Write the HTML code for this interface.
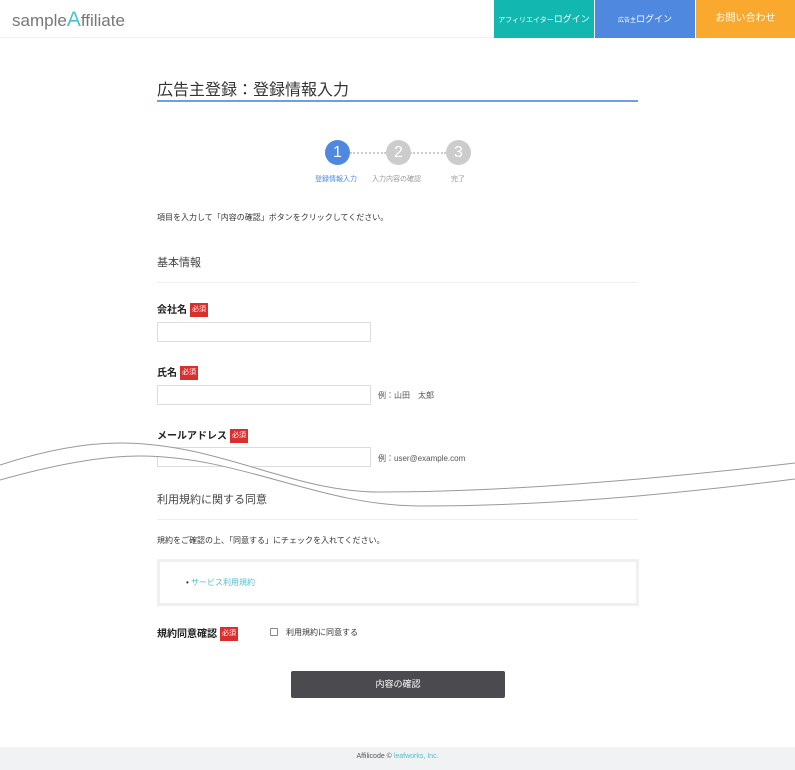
<!DOCTYPE html>
<html><head><meta charset="utf-8"><style>
*{margin:0;padding:0;box-sizing:border-box}
body{width:795px;height:770px;position:relative;background:#fff;font-family:"Liberation Sans","Noto Sans CJK JP",sans-serif;color:#333;overflow:hidden}
.a{position:absolute}
.hdr{left:0;top:0;width:795px;height:38px;border-bottom:1px solid #eee;background:#fff}
.logo{left:12px;top:8px;font-size:17px;color:#777}
.logo b{font-weight:normal;color:#4bc0d0;font-size:21px}
.nav{top:0;height:38px;color:#fff;text-align:center;line-height:38px;white-space:nowrap}
.lbl{font-size:10px;font-weight:bold;color:#222}
.req{display:inline-block;background:#d9302e;color:#fff;font-size:7px;padding:0 2px;height:14px;line-height:14px;margin-left:3px;vertical-align:middle;font-weight:normal}
.inp{left:157px;width:214px;height:20px;border:1px solid #ddd;background:#fff}
.ex{font-size:8px;color:#555}
.circ{width:25px;height:25px;border-radius:50%;color:#fff;text-align:center;line-height:25px;font-size:16px}
.dots{height:0;border-top:2px dotted #ccc;top:152px}
.hr{left:157px;width:481px;height:1px;background:#eee}
</style></head><body>
<div class="a hdr"></div>
<div class="a logo">sample<b>A</b>ffiliate</div>
<div class="a nav" style="left:494px;width:100px;background:#12b7b0;font-size:7px">アフィリエイター<span style="font-size:9px">ログイン</span></div>
<div class="a nav" style="left:595px;width:100px;background:#4f88df;font-size:6px">広告主<span style="font-size:9px">ログイン</span></div>
<div class="a nav" style="left:696px;width:99px;background:#f9a92d;font-size:10px">お問い合わせ</div>

<div class="a" style="left:157px;top:76px;font-size:16px;color:#333">広告主登録：登録情報入力</div>
<div class="a" style="left:157px;top:100px;width:481px;height:2px;background:#6b9fe6"></div>

<div class="a dots" style="left:350px;width:36px"></div>
<div class="a dots" style="left:410px;width:36px"></div>
<div class="a circ" style="left:325px;top:140px;background:#4f88df">1</div>
<div class="a circ" style="left:386px;top:140px;background:#ccc">2</div>
<div class="a circ" style="left:446px;top:140px;background:#ccc">3</div>
<div class="a" style="left:315px;top:174px;font-size:7px;color:#4f88df">登録情報入力</div>
<div class="a" style="left:372px;top:174px;font-size:7px;color:#999">入力内容の確認</div>
<div class="a" style="left:451px;top:174px;font-size:7px;color:#999">完了</div>

<div class="a" style="left:157px;top:212px;font-size:8px;color:#333">項目を入力して「内容の確認」ボタンをクリックしてください。</div>
<div class="a" style="left:157px;top:254px;font-size:11px;color:#444">基本情報</div>
<div class="a hr" style="top:282px"></div>

<div class="a lbl" style="left:157px;top:301px">会社名<span class="req">必須</span></div>
<div class="a inp" style="top:322px"></div>
<div class="a lbl" style="left:157px;top:364px">氏名<span class="req">必須</span></div>
<div class="a inp" style="top:385px"></div>
<div class="a ex" style="left:378px;top:390px">例：山田　太郎</div>
<div class="a lbl" style="left:157px;top:427px">メールアドレス<span class="req">必須</span></div>
<div class="a inp" style="top:447px"></div>
<div class="a ex" style="left:378px;top:453px">例：user@example.com</div>

<svg class="a" style="left:0;top:0" width="795" height="770">
<path d="M0,465 C40,452 80,443 120,443 C220,443 290,492 380,492 C500,492 650,480 795,463 L795,479 C660,496 540,506 420,506 C320,506 240,456 140,456 C100,456 50,466 0,480 Z" fill="#fff"/>
<path d="M0,465 C40,452 80,443 120,443 C220,443 290,492 380,492 C500,492 650,480 795,463" fill="none" stroke="#999" stroke-width="1"/>
<path d="M0,480 C50,466 100,456 140,456 C240,456 320,506 420,506 C540,506 660,496 795,479" fill="none" stroke="#999" stroke-width="1"/>
</svg>

<div class="a" style="left:157px;top:491px;font-size:11px;color:#444">利用規約に関する同意</div>
<div class="a hr" style="top:519px"></div>
<div class="a" style="left:157px;top:535px;font-size:8px;color:#333">規約をご確認の上、「同意する」にチェックを入れてください。</div>
<div class="a" style="left:157px;top:559px;width:482px;height:47px;border:3px solid #f0f0f0"></div>
<div class="a" style="left:186px;top:577px;font-size:8px;color:#4bc0d0"><span style="color:#333">•</span> サービス利用規約</div>

<div class="a lbl" style="left:157px;top:625px">規約同意確認<span class="req">必須</span></div>
<div class="a" style="left:270px;top:628px;width:8px;height:8px;border:1px solid #888;border-radius:1px"></div>
<div class="a" style="left:286px;top:627px;font-size:8px;color:#333">利用規約に同意する</div>

<div class="a" style="left:291px;top:671px;width:214px;height:27px;background:#4b4a4f;border-radius:2px;color:#fff;font-size:9px;text-align:center;line-height:27px">内容の確認</div>

<div class="a" style="left:0;top:747px;width:795px;height:23px;background:#f1f2f4;text-align:center;line-height:20px;font-size:7px;color:#555">Affilicode © <span style="color:#4bc0d0">leafworks, Inc.</span></div>
</body></html>
